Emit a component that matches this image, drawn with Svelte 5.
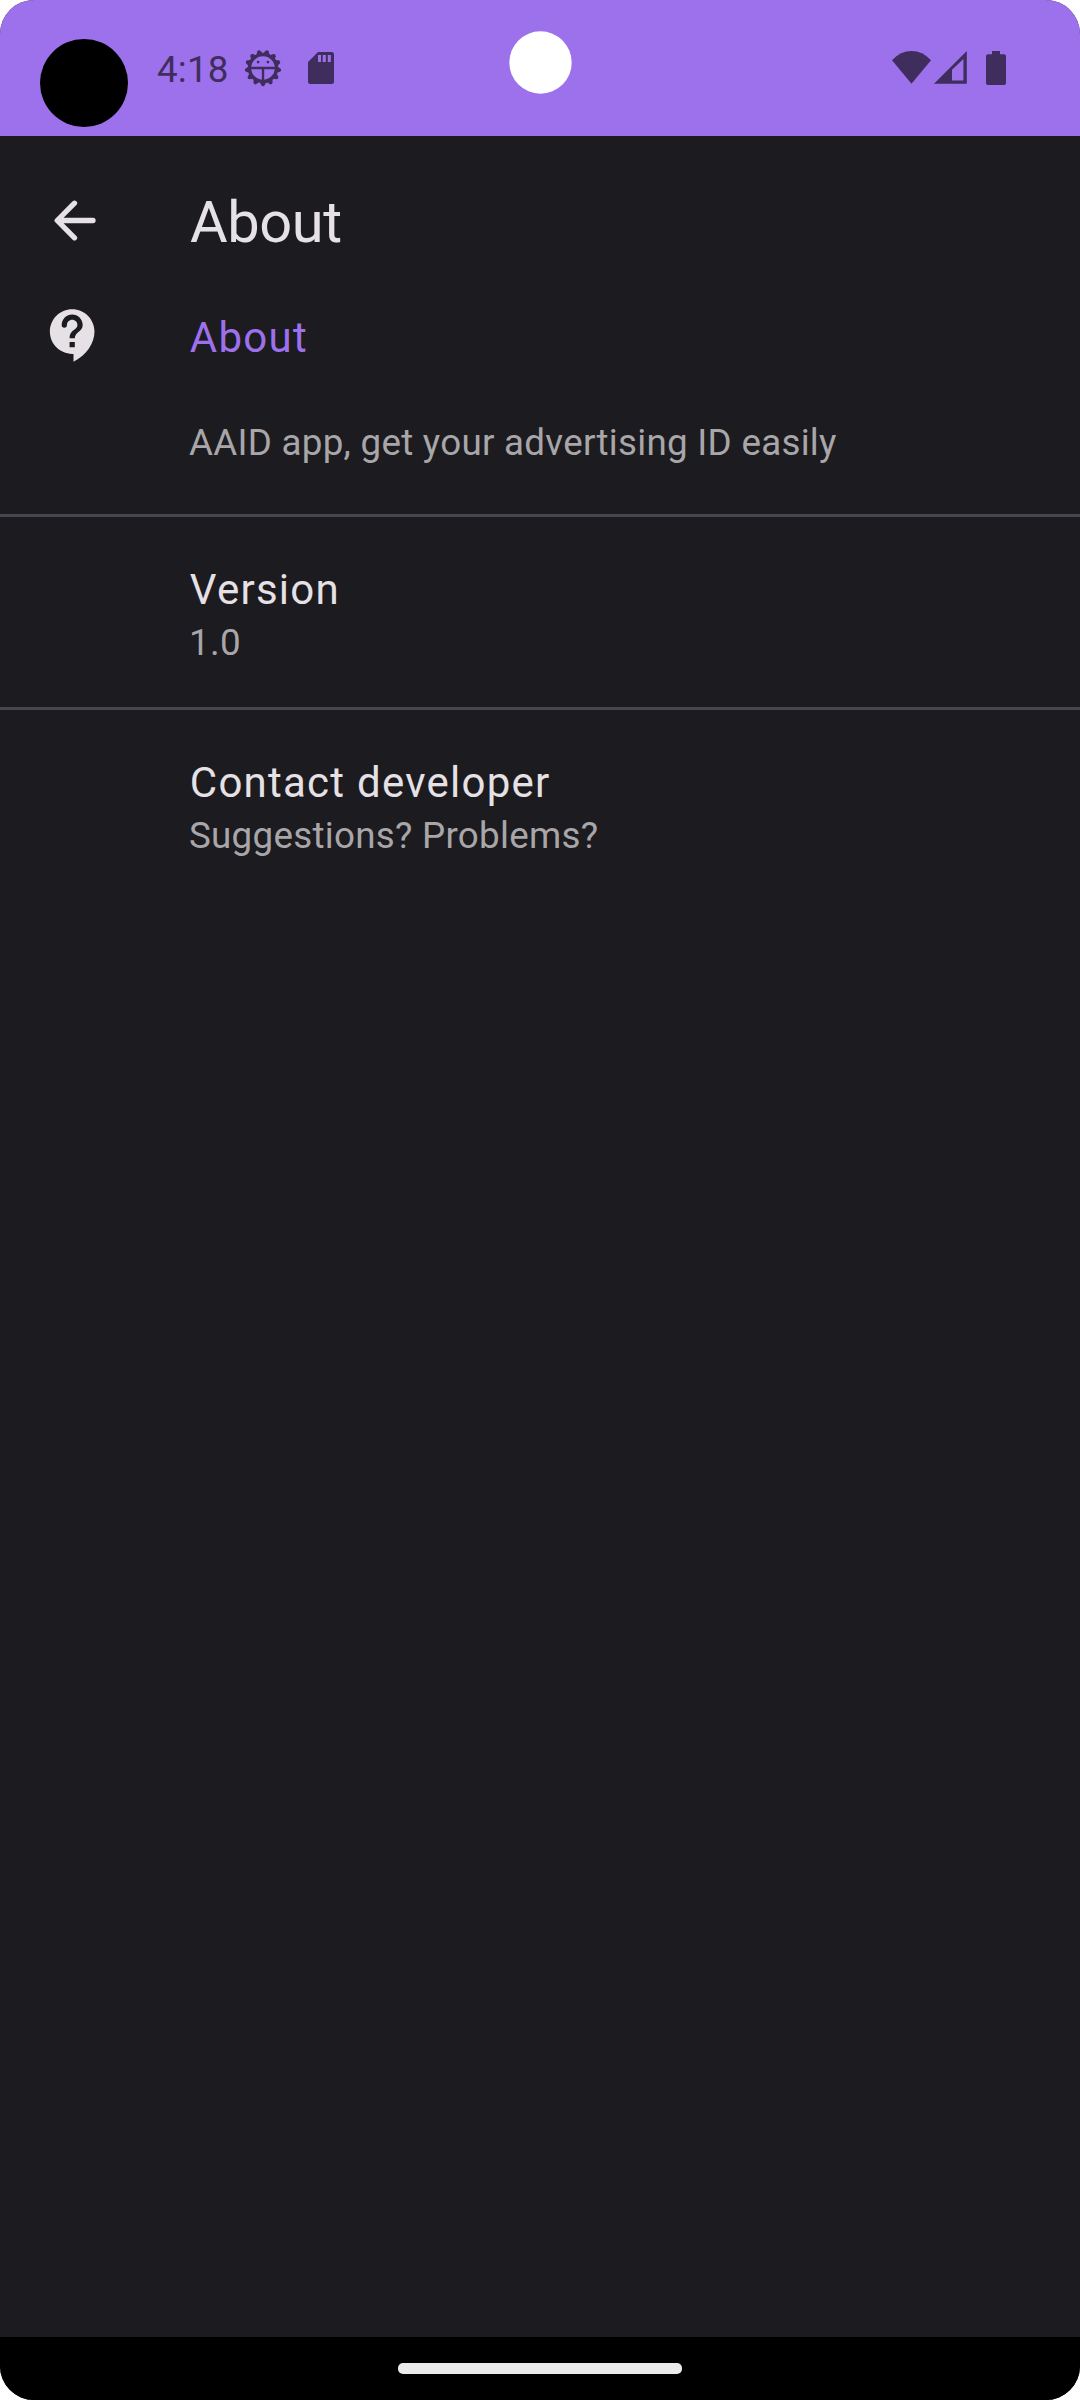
<script>
  const items = [
    { title: 'Version', summary: '1.0' },
    { title: 'Contact developer', summary: 'Suggestions? Problems?' },
  ];
  const teeth = Array.from({ length: 13 }, (_, i) => 180 + (i * 360) / 13);
</script>

<div class="screen">
  <header class="status">
    <div class="bubble"></div>
    <span class="time">4:18</span>
    <svg class="gear" width="38" height="38" viewBox="-19 -19 38 38">
      {#each teeth as angle}
        <path d="M-3.5-13.5L-1.7-17.3Q0-19.3 1.7-17.3L3.5-13.5Z" transform="rotate({angle})" />
      {/each}
      <circle r="13.5" class="ring" />
      <path d="M-13-1.3H13V1.2H1.2V13H-1.2V1.2H-13Z" />
      <circle cx="-4.9" cy="-5.9" r="1.4" />
      <circle cx="4.9" cy="-5.9" r="1.4" />
    </svg>
    <svg class="sd" width="26" height="32" viewBox="0 0 26 32">
      <path fill-rule="evenodd" d="M10 0H23.5Q26 0 26 2.5V29.5Q26 32 23.5 32H2.5Q0 32 0 29.5V10ZM10 3V10H13V3ZM14.7 3V10H17.8V3ZM19.8 3V10H22.8V3Z" />
    </svg>
    <svg class="camera" width="64" height="64" viewBox="0 0 64 64">
      <circle cx="32.5" cy="32.5" r="31.2" />
    </svg>
    <svg class="wifi" width="39" height="33" viewBox="0 0 39 33">
      <path d="M0 9.2Q8.5 0 19.5 0T39 9.2L19.5 32.7Z" />
    </svg>
    <svg class="signal" width="33" height="33" viewBox="0 0 33 33">
      <path fill-rule="evenodd" d="M0 32.8L32.8 0V32.8ZM18 18.7V29.6H29.4V7.9Z" />
    </svg>
    <svg class="battery" width="20" height="34" viewBox="0 0 20 34">
      <path d="M6 0H14V3.3H18Q20 3.3 20 5.3V32Q20 34 18 34H2Q0 34 0 32V5.3Q0 3.3 2 3.3H6Z" />
    </svg>
  </header>

  <main>
    <div class="toolbar">
      <svg class="back" width="42" height="40" viewBox="0 0 42 40">
        <path d="M19.5 3.2L2.2 20.5L19.5 37.8M3 20.5H38" />
      </svg>
      <h1>About</h1>
    </div>

    <section class="category">
      <svg class="help" width="63" height="63" viewBox="0 0 24 24">
        <path d="M11.5 2C6.81 2 3 5.81 3 10.5S6.81 19 11.5 19h.5v3c4.86-2.34 8-7 8-11.5C20 5.81 16.19 2 11.5 2zm1 14.5h-2v-2h2v2zm0-3.5h-2c0-3.25 3-3 3-5 0-1.1-.9-2-2-2s-2 .9-2 2a1 1 0 0 1-2 0c0-2.21 1.79-4 4-4s4 1.79 4 4c0 2.5-3 2.75-3 5z" />
      </svg>
      <div>
        <h2>About</h2>
        <p>AAID app, get your advertising ID easily</p>
      </div>
    </section>

    {#each items as item}
      <section class="item">
        <h3>{item.title}</h3>
        <p>{item.summary}</p>
      </section>
    {/each}
  </main>

  <footer><div class="handle"></div></footer>
</div>

<style>
  :global(body) { background: #fff; }
  .screen {
    width: 1080px;
    height: 2400px;
    display: flex;
    flex-direction: column;
    overflow: hidden;
    border-radius: 34px;
    background: #1c1b1f;
    color: #e6e1e5;
    font-family: Roboto, sans-serif;
  }
  h1, h2, h3, p { margin: 0; font-weight: 400; }
  svg { display: block; flex: none; }
  .status {
    box-sizing: border-box;
    height: 136px;
    padding-left: 40px;
    display: flex;
    align-items: flex-start;
    background: #9d71eb;
    color: #3f2d5e;
    fill: #3f2d5e;
  }
  .bubble { width: 88px; height: 88px; margin-top: 39px; border-radius: 50%; background: #000; }
  .time { width: 87px; margin: 48px 0 0 29px; font-size: 36.75px; line-height: 44px; letter-spacing: 0.2px; }
  .gear { margin-top: 49px; }
  .ring { fill: none; stroke: #3f2d5e; stroke-width: 3.4; }
  .sd { margin: 52px 0 0 26px; }
  .camera { margin: 30px 0 0 174px; fill: #fff; }
  .wifi { margin: 51px 0 0 320px; }
  .signal { margin: 51px 0 0 3px; }
  .battery { margin: 51px 0 0 19px; }

  main { flex: 1; }
  .toolbar { height: 168px; padding-left: 55px; display: flex; align-items: center; }
  .back { overflow: visible; fill: none; stroke: #e6e1e5; stroke-width: 5.3; stroke-linecap: round; stroke-linejoin: round; }
  h1 { margin: 4px 0 0 93px; font-size: 57.75px; line-height: 68px; letter-spacing: -0.4px; }
  .category { height: 210px; padding-left: 42px; display: flex; fill: #e6e1e5; }
  .category > div { padding: 8.6px 0 0 84px; }
  h2, h3 { padding-left: 0.8px; font-size: 42px; line-height: 50px; letter-spacing: 1.25px; }
  h2 { color: #9d71eb; }
  p { font-size: 36.75px; line-height: 44px; letter-spacing: 0.27px; color: #a8a6a9; }
  .category p { margin-top: 58.2px; }
  .item { box-sizing: border-box; height: 193px; padding: 47.6px 0 0 189px; border-top: 3px solid #49454f; }
  .item p { margin-top: 6.4px; }

  footer { height: 63px; display: flex; justify-content: center; background: #000; }
  .handle { width: 284px; height: 11px; margin-top: 26px; border-radius: 5px; background: #ebebeb; }
</style>
